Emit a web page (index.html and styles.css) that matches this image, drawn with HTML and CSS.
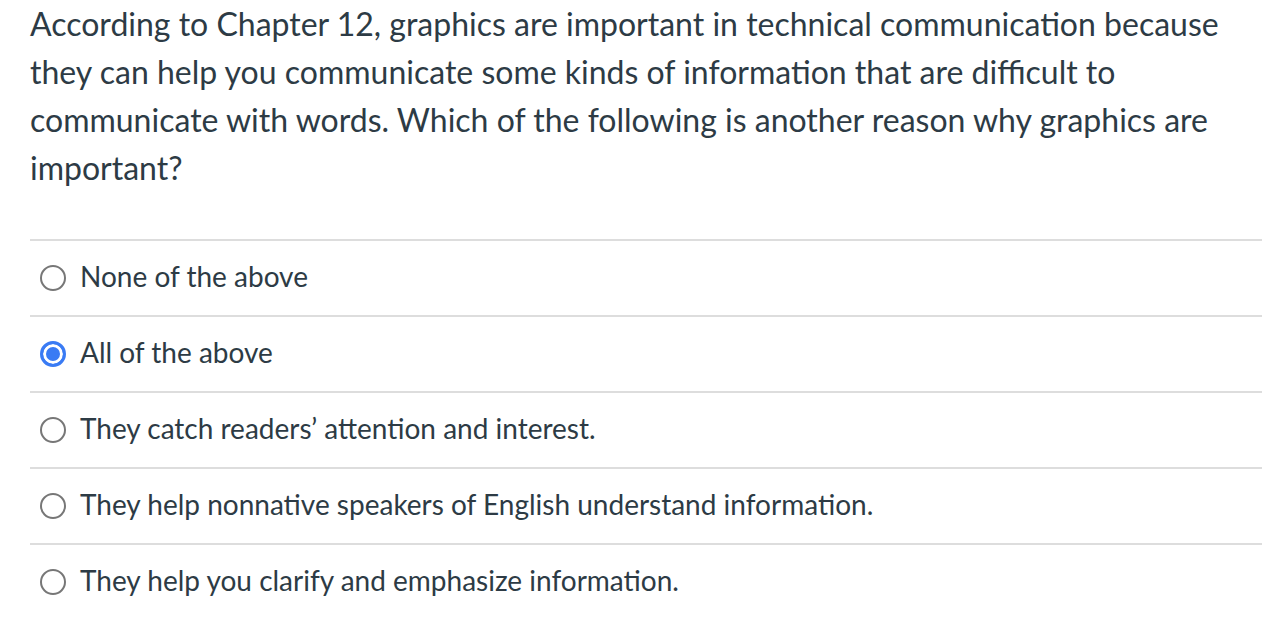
FILE: index.html
```html
<!DOCTYPE html>
<html>
<head>
<meta charset="utf-8">
<link rel="stylesheet" href="styles.css">
</head>
<body>
<div class="quiz">
  <div class="question">According to Chapter 12, graphics are important in technical communication because they can help you communicate some kinds of information that are difficult to communicate with words. Which of the following is another reason why graphics are important?</div>
  <div class="answers">
    <label class="answer"><span class="radio"></span><span class="text">None of the above</span></label>
    <label class="answer"><span class="radio checked"></span><span class="text">All of the above</span></label>
    <label class="answer"><span class="radio"></span><span class="text">They catch readers’ attention and interest.</span></label>
    <label class="answer"><span class="radio"></span><span class="text">They help nonnative speakers of English understand information.</span></label>
    <label class="answer"><span class="radio"></span><span class="text">They help you clarify and emphasize information.</span></label>
  </div>
</div>
</body>
</html>
```
FILE: styles.css
```css
html, body {
  margin: 0;
  padding: 0;
  background: #fff;
}
body {
  font-family: Lato, "Liberation Sans", sans-serif;
  color: #2d3b45;
}
.quiz {
  padding-left: 30px;
}
.question {
  font-size: 32px;
  line-height: 48px;
  padding-right: 20px;
}
.answers {
  margin-top: 47px;
}
.answer {
  display: flex;
  align-items: center;
  height: 74px;
  border-top: 2px solid #dddddd;
  padding-left: 10px;
}
.radio {
  box-sizing: border-box;
  width: 26px;
  height: 26px;
  border-radius: 50%;
  border: 2px solid #777777;
  flex: none;
  margin-right: 14px;
}
.radio.checked {
  border: 3px solid #3a7bf4;
  background: #3a7bf4;
  box-shadow: inset 0 0 0 3px #ffffff;
}
.text {
  font-size: 28px;
  padding-bottom: 4px;
}
```
